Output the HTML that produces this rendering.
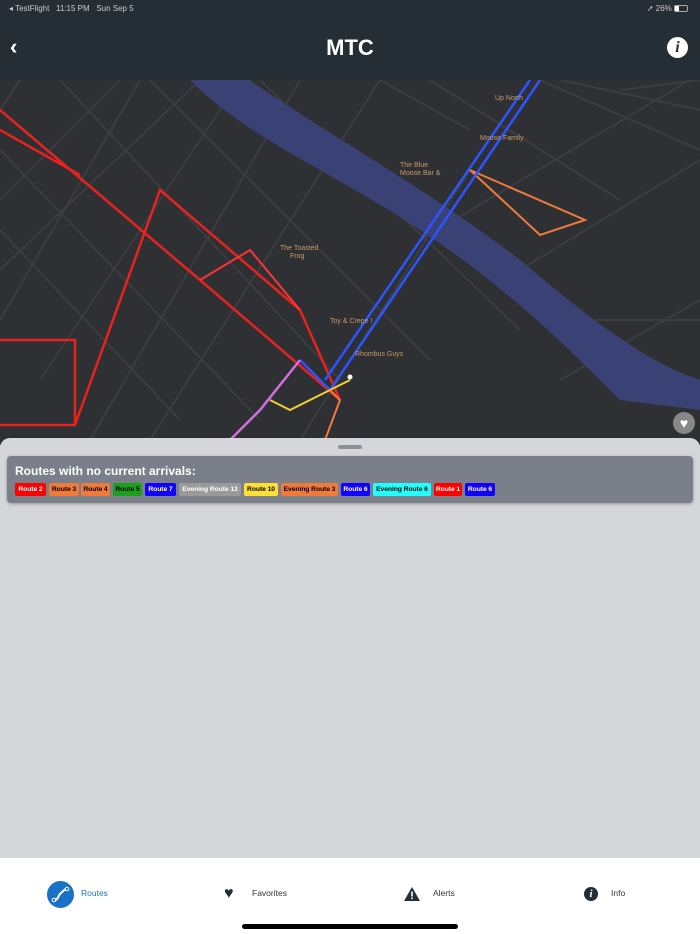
<!DOCTYPE html>
<html><head><meta charset="utf-8"><style>
*{margin:0;padding:0;box-sizing:border-box}
body{width:700px;height:934px;overflow:hidden;background:#d5d6da;font-family:"Liberation Sans",sans-serif;position:relative}
.top{position:absolute;left:0;top:0;width:700px;height:80px;background:#252e35;color:#fff}
.map{position:absolute;left:0;top:80px;width:700px;height:365px;background:#2f3033;overflow:hidden}
.sheet{position:absolute;left:0;top:438px;width:700px;height:422px;background:#d5d6da;border-radius:10px 10px 0 0}
.card{position:absolute;left:7px;top:456px;width:686px;height:47px;background:#7a7f8a;border-radius:4px;box-shadow:0 1px 3px rgba(0,0,0,.3)}
.card h3{position:absolute;left:8px;top:8px;font-size:12px;color:#fff;font-weight:bold}
.b{position:absolute;top:27px;height:13px;font-size:6.8px;font-weight:bold;line-height:13px;text-align:center;border-radius:2px;white-space:nowrap;overflow:hidden;letter-spacing:-0.1px}
.tab{position:absolute;left:0;top:858px;width:700px;height:76px;background:#fff}
.tl{position:absolute;top:30px;font-size:8.5px;color:#333}
</style></head><body>
<div class="top">
<div style="position:absolute;left:9px;top:4px;font-size:8px;color:#ccc">◂ TestFlight&nbsp;&nbsp; 11:15 PM&nbsp;&nbsp; Sun Sep 5</div>
<div style="position:absolute;right:12px;top:4px;font-size:8px;color:#ccc">➚ 26% <span style="display:inline-block;width:14px;height:7px;border:1px solid #aaa;border-radius:2px;vertical-align:middle;position:relative"><span style="position:absolute;left:0;top:0;width:4px;height:5px;background:#fff"></span></span></div>
<div style="position:absolute;left:10px;top:34px;font-size:22px;font-weight:bold">‹</div>
<div style="position:absolute;left:0;width:700px;top:35px;text-align:center;font-size:22px;font-weight:bold">MTC</div>
<div style="position:absolute;left:667px;top:37px;width:21px;height:21px;border-radius:50%;background:#fff;color:#252e35;font:bold italic 16px 'Liberation Serif',serif;text-align:center;line-height:21px">i</div>
</div>
<div class="map"><svg width="700" height="365" viewBox="0 80 700 365">
<g stroke="#3c3d41" stroke-width="2" fill="none">
<path d="M0 150L260 420M0 230L180 420M60 80L340 380M150 80L430 360M260 80L520 330M0 320L140 80M40 380L240 80M150 440L380 80M300 440L470 170M420 240L690 80M520 270L700 160M540 320L700 320M20 80L0 110M620 90L700 80M560 380L700 300M0 200L120 80M0 270L200 80M90 440L300 80M380 80L470 130M430 80L620 200M540 80L700 150M560 80L700 110"/>
</g>
<path d="M190 80 C250 140 330 170 420 230 C510 290 560 340 620 400 L700 410 L700 380 C640 360 580 310 520 260 C430 190 320 130 250 80Z" fill="#3a4275"/>
<g fill="none" stroke-width="2.5">
<path d="M0 110L200 280L340 400M0 340L75 340L75 425L0 425M75 425L160 190L300 310L340 400M0 130L80 175" stroke="#e8221f"/>
<path d="M200 280L250 250L300 310" stroke="#f33" stroke-width="2"/>
<path d="M470 170L585 220L540 235L470 170" stroke="#f07a3a" stroke-width="2"/>
<path d="M540 80L330 390L300 360M530 80L325 380" stroke="#2d55ff" stroke-width="2.5"/>
<path d="M300 360L260 410L230 440" stroke="#d070e0"/>
<path d="M270 400L290 410L350 380" stroke="#f0d030" stroke-width="2"/>
<path d="M330 390L340 400L325 440" stroke="#f07a3a" stroke-width="2"/>
</g>
<circle cx="350" cy="377" r="2.5" fill="#fff"/>
<circle cx="684" cy="423" r="11" fill="#888"/>
<text x="684" y="428" font-size="14" fill="#fff" text-anchor="middle">♥</text>
<g font-size="7" fill="#c89a6a" font-family="Liberation Sans"><text x="280" y="250">The Toasted</text><text x="290" y="258">Frog</text><text x="400" y="167">The Blue</text><text x="400" y="175">Moose Bar &amp;</text><text x="330" y="323">Toy &amp; Crepe !</text><text x="355" y="356">Rhombus Guys</text><text x="495" y="100">Up North</text><text x="480" y="140">Moose Family</text></g>
</svg></div>
<div class="sheet"><div style="position:absolute;left:338px;top:7px;width:24px;height:4px;border-radius:2px;background:#8e9097"></div></div>
<div class="card"><h3>Routes with no current arrivals:</h3>
<span class="b" style="left:8px;width:31px;background:#f00;color:#fff">Route 2</span>
<span class="b" style="left:42px;width:30px;background:#f07a3a;color:#000">Route 3</span>
<span class="b" style="left:74px;width:29px;background:#f07a3a;color:#000">Route 4</span>
<span class="b" style="left:106px;width:29px;background:#1aa01a;color:#000">Route 5</span>
<span class="b" style="left:138px;width:31px;background:#10f;color:#fff">Route 7</span>
<span class="b" style="left:172px;width:62px;background:#9a9a9a;color:#fff">Evening Route 13</span>
<span class="b" style="left:237px;width:34px;background:#ffe033;color:#000">Route 10</span>
<span class="b" style="left:274px;width:57px;background:#f07a3a;color:#000">Evening Route 3</span>
<span class="b" style="left:334px;width:29px;background:#10f;color:#fff">Route 6</span>
<span class="b" style="left:366px;width:58px;background:#2ff;color:#000">Evening Route 6</span>
<span class="b" style="left:427px;width:28px;background:#f00;color:#fff">Route 1</span>
<span class="b" style="left:458px;width:30px;background:#10f;color:#fff">Route 6</span>
</div>
<div class="tab">
<div style="position:absolute;left:47px;top:23px;width:27px;height:27px;border-radius:50%;background:#1a72c8"><svg width="27" height="27"><path d="M8 19c3 0 3-4 5-6s5-5 6-5" stroke="#fff" stroke-width="2" fill="none"/><circle cx="7" cy="19" r="1.8" fill="none" stroke="#fff"/><circle cx="20" cy="8" r="1.8" fill="none" stroke="#fff"/></svg></div>
<div class="tl" style="left:81px;color:#1a72c8">Routes</div>
<div style="position:absolute;left:224px;top:27px;font-size:16px;color:#252e35">♥</div>
<div class="tl" style="left:252px">Favorites</div>
<svg style="position:absolute;left:404px;top:29px" width="16" height="14"><path d="M8 0L16 14H0Z" fill="#252e35"/><rect x="7.2" y="4.5" width="1.6" height="5" fill="#fff"/><rect x="7.2" y="10.5" width="1.6" height="1.6" fill="#fff"/></svg>
<div class="tl" style="left:433px">Alerts</div>
<div style="position:absolute;left:584px;top:29px;width:14px;height:14px;border-radius:50%;background:#252e35;color:#fff;font:bold italic 11px 'Liberation Serif',serif;text-align:center;line-height:14px">i</div>
<div class="tl" style="left:611px">Info</div>
<div style="position:absolute;left:242px;top:66px;width:216px;height:5px;border-radius:3px;background:#000"></div>
</div>
</body></html>
